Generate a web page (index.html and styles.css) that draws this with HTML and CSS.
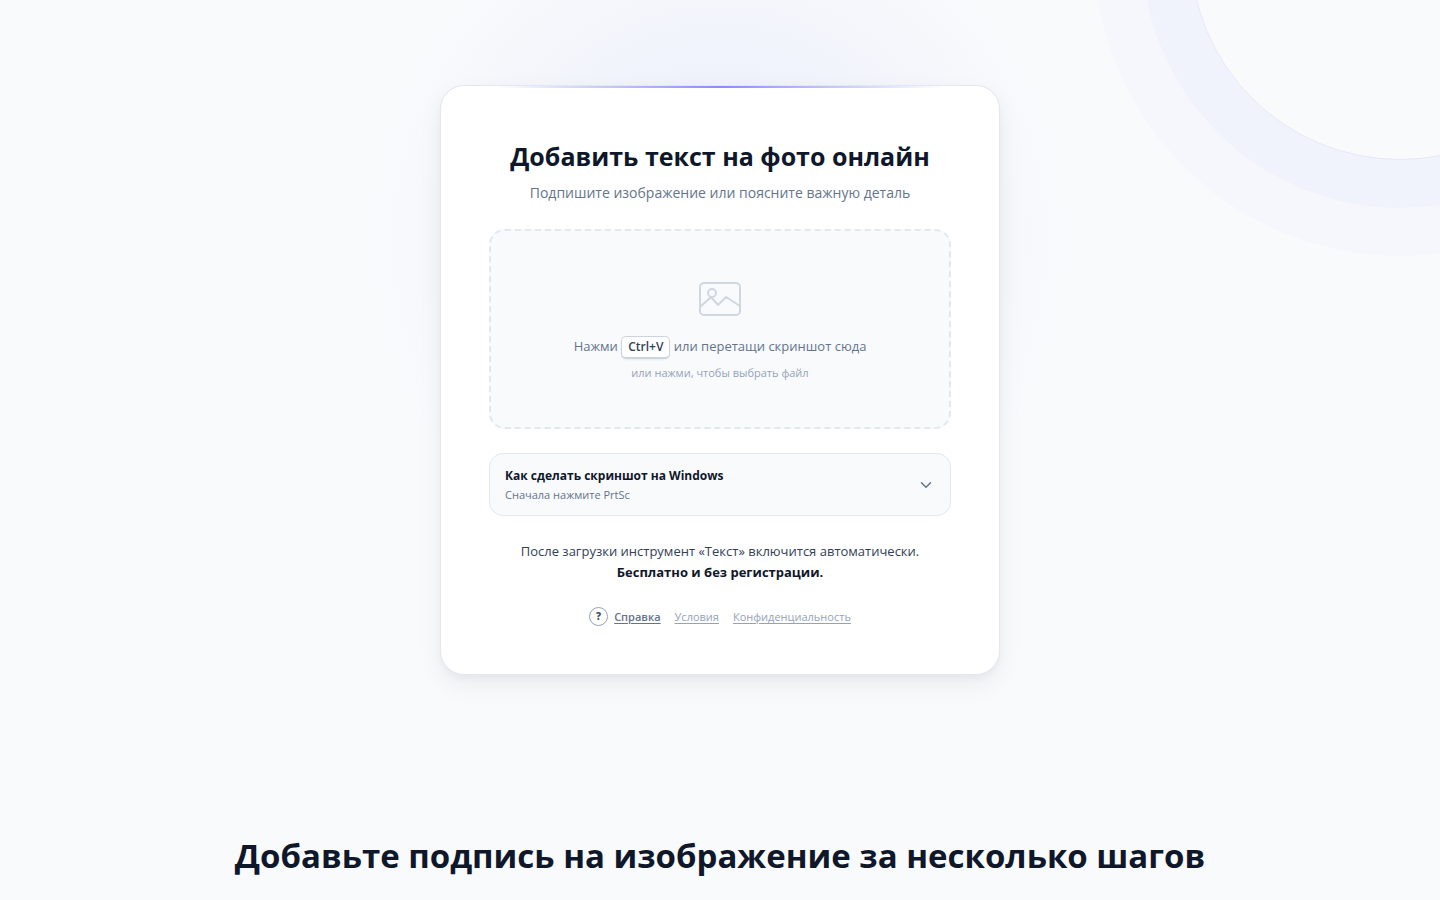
FILE: index.html
```html
<!DOCTYPE html>
<html lang="ru">
<head>
    <meta charset="UTF-8">
    <meta name="viewport" content="width=device-width, initial-scale=1.0">
    <title>Добавить текст на фото онлайн</title>
    <link rel="stylesheet" href="styles.css">
</head>
<body>
    <main class="page">
        <section class="hero">
            <div class="glow"></div>
            <div class="rings"></div>

            <div class="card">
                <h1>Добавить текст на фото онлайн</h1>
                <p class="subtitle">Подпишите изображение или поясните важную деталь</p>

                <button type="button" class="dropzone">
                    <svg class="drop-icon" width="48" height="48" viewBox="0 0 48 48" fill="none" stroke="currentColor" stroke-width="2" stroke-linecap="round" stroke-linejoin="round" aria-hidden="true">
                        <rect x="4" y="8" width="40" height="32" rx="4"/>
                        <circle cx="16" cy="18" r="4"/>
                        <path d="M4 32l11-10 7 8 8-8 14 9"/>
                    </svg>
                    <span class="drop-text">Нажми <kbd>Ctrl+V</kbd> или перетащи скриншот сюда</span>
                    <span class="drop-hint">или нажми, чтобы выбрать файл</span>
                </button>

                <details class="guide">
                    <summary>
                        <span class="guide-text">
                            <span class="guide-title">Как сделать скриншот на Windows</span>
                            <span class="guide-sub">Сначала нажмите PrtSc</span>
                        </span>
                        <svg width="18" height="18" viewBox="0 0 24 24" fill="none" stroke="currentColor" stroke-width="2" stroke-linecap="round" stroke-linejoin="round" aria-hidden="true">
                            <path d="M6 9l6 6 6-6"/>
                        </svg>
                    </summary>
                </details>

                <p class="note">
                    После загрузки инструмент «Текст» включится автоматически.
                    <strong>Бесплатно и без регистрации.</strong>
                </p>

                <nav class="links">
                    <a href="#help" class="help"><span class="help-mark">?</span><span class="help-label">Справка</span></a>
                    <a href="#terms">Условия</a>
                    <a href="#privacy">Конфиденциальность</a>
                </nav>
            </div>
        </section>

        <section class="steps">
            <h2>Добавьте подпись на изображение за несколько шагов</h2>
        </section>
    </main>
</body>
</html>
```
FILE: styles.css
```css
* {
    box-sizing: border-box;
}

body {
    margin: 0;
    font-family: "Segoe UI", "Open Sans", "Noto Sans", sans-serif;
    color: #0f172a;
    background-color: #f9fafc;
}

h1, h2, p {
    margin: 0;
}

.page {
    position: relative;
    overflow: hidden;
}

.hero {
    display: flex;
    justify-content: center;
    padding: 85px 20px;
}

/* soft light behind the card */
.glow {
    position: absolute;
    top: -110px;
    left: 50%;
    width: 700px;
    height: 700px;
    margin-left: -350px;
    border-radius: 50%;
    background: radial-gradient(circle closest-side, rgba(99, 140, 241, 0.12) 0%, rgba(99, 130, 241, 0.06) 50%, rgba(99, 102, 241, 0) 100%);
}

.rings {
    position: absolute;
    top: -260px;
    right: -170px;
    width: 420px;
    height: 420px;
    border: 1px solid #e6e6fb;
    border-radius: 50%;
    box-shadow: 0 0 0 48px #f0f3fc, 0 0 0 96px #f6f7fc;
}

.card {
    position: relative;
    width: 100%;
    max-width: 560px;
    padding: 48px;
    border: 1px solid #e2e8f0;
    border-radius: 24px;
    background-color: white;
    box-shadow: 0 4px 6px rgba(15, 23, 42, 0.03), 0 10px 24px rgba(15, 23, 42, 0.06);
    text-align: center;
}

.card::before {
    content: "";
    position: absolute;
    top: 0;
    left: 10%;
    right: 10%;
    height: 2px;
    background: linear-gradient(90deg, transparent, #8b8cf6, transparent);
}

h1 {
    margin-bottom: 4px;
    font-size: 25px;
    line-height: 44px;
    font-weight: 700;
}

.subtitle {
    margin-bottom: 25px;
    font-size: 14px;
    line-height: 22px;
    color: #64748b;
}

.dropzone {
    display: flex;
    flex-direction: column;
    align-items: center;
    justify-content: center;
    width: 100%;
    min-height: 200px;
    padding: 40px 20px;
    border: 2px dashed #e2e8f0;
    border-radius: 16px;
    background-color: #f9fafc;
    font-family: inherit;
    cursor: pointer;
}

.drop-icon {
    margin-bottom: 11px;
    color: #d0d7e2;
}

.drop-text {
    margin-bottom: 4px;
    font-size: 13px;
    line-height: 24px;
    color: #64748b;
}

kbd {
    display: inline-block;
    padding: 0 6px;
    border: 1px solid #cbd5e1;
    border-bottom-width: 2px;
    border-radius: 5px;
    background-color: white;
    box-shadow: 0 1px 2px rgba(15, 23, 42, 0.06);
    font-family: inherit;
    font-size: 12px;
    line-height: 20px;
    font-weight: 600;
    color: #334155;
}

.drop-hint {
    font-size: 11px;
    line-height: 20px;
    color: #94a3b8;
}

.guide {
    margin: 24px 0 25px;
    border: 1px solid #e2e8f0;
    border-radius: 14px;
    background-color: #f9fafc;
    text-align: left;
}

.guide summary {
    display: flex;
    align-items: center;
    justify-content: space-between;
    padding: 12px 15px;
    list-style: none;
    color: #64748b;
    cursor: pointer;
}

.guide-title, .guide-sub {
    display: block;
}

.guide-title {
    font-size: 12px;
    line-height: 20px;
    font-weight: 700;
    color: #0f172a;
}

.guide-sub {
    font-size: 11px;
    line-height: 17px;
}

.note {
    margin-bottom: 24px;
    font-size: 13px;
    line-height: 21px;
    color: #334155;
}

.note strong {
    display: block;
    color: #0f172a;
}

.links {
    display: flex;
    align-items: center;
    justify-content: center;
    gap: 14px;
    font-size: 11px;
    line-height: 19px;
}

.links a {
    color: #94a3b8;
    text-underline-offset: 2px;
}

.links .help {
    display: flex;
    align-items: center;
    gap: 6px;
    font-weight: 600;
    color: #64748b;
    text-decoration: none;
}

.help-label {
    text-decoration: underline;
}

.help-mark {
    width: 19px;
    height: 19px;
    border: 1px solid #94a3b8;
    border-radius: 50%;
    font-size: 10px;
    line-height: 17px;
    font-weight: 800;
    text-align: center;
    color: #475569;
}

.steps {
    padding: 68px 20px;
    text-align: center;
}

h2 {
    font-size: 33px;
    line-height: 56px;
    font-weight: 700;
}
```
